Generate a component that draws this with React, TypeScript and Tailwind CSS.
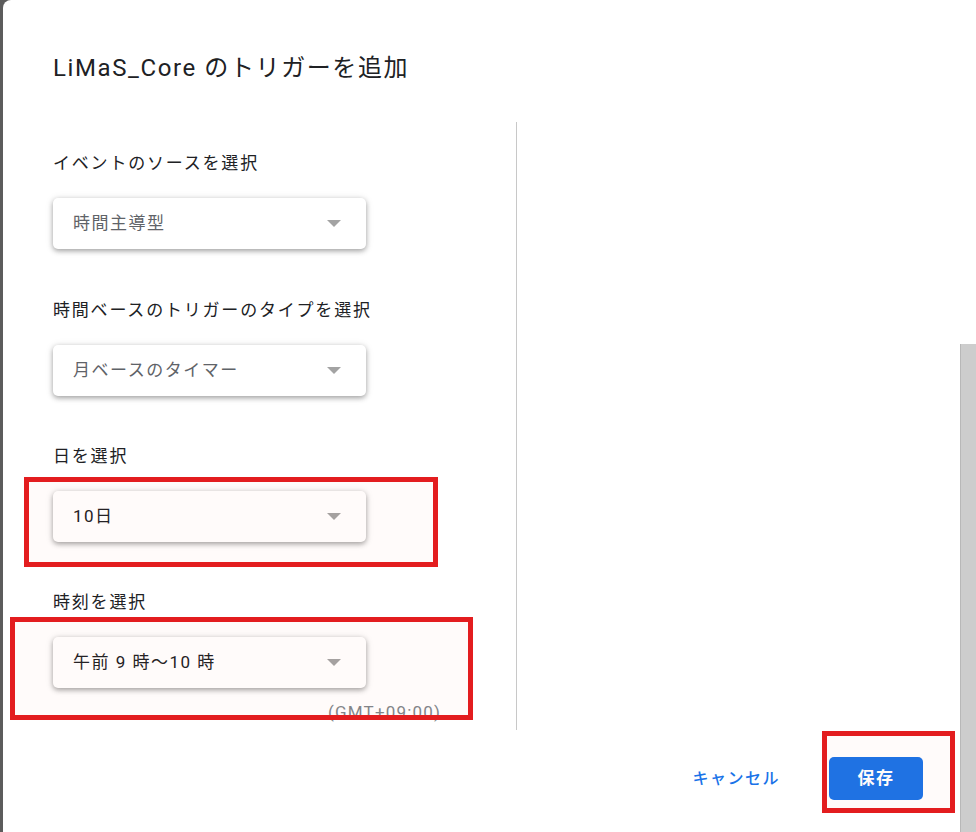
import React from 'react';

const font = { fontFamily: 'Roboto, "Noto Sans CJK JP", sans-serif' };

const Select = ({ value, dark }: { value: string; dark?: boolean }) => (
  <div className="w-[313px] h-[51px] bg-white rounded-[5px] shadow-[0_2px_5px_rgba(0,0,0,0.3),0_1px_9px_rgba(0,0,0,0.12)] flex items-center justify-between pl-[20px] pr-[25px]">
    <span className={`text-[17px] tracking-[1.5px] ${dark ? 'text-[#202124]' : 'text-[#5f6368]'}`}>{value}</span>
    <span className="w-0 h-0 border-l-[7px] border-r-[7px] border-t-[7px] border-l-transparent border-r-transparent border-t-[#a3a3a3]"></span>
  </div>
);

const Field = ({ label, value, dark, top }: { label: string; value: string; dark?: boolean; top: string }) => (
  <div className={top}>
    <div className="text-[17px] leading-[24px] tracking-[1.8px] text-[#202124] mb-[23px]">{label}</div>
    <Select value={value} dark={dark} />
  </div>
);

const App = () => {
  return (
    <div className="relative w-[976px] h-[832px] overflow-hidden bg-[#5c5c5c] flex" style={font}>
      {/* left edge of page behind dialog */}
      <div className="w-[3px] shrink-0"></div>

      {/* Dialog */}
      <div className="flex-1 bg-white rounded-tl-[8px] flex">
        <div className="flex-1 flex flex-col">
          <h1 className="pt-[52px] pl-[50px] text-[24px] leading-[32px] tracking-[1.6px] text-[#202124] font-normal">
            LiMaS_Core のトリガーを追加
          </h1>

          <div className="mt-[38px] pl-[50px] flex h-[608px]">
            <div className="w-[464px] h-full border-r border-[#c8c8c8] pt-[29px]">
              <Field label="イベントのソースを選択" value="時間主導型" top="" />
              <Field label="時間ベースのトリガーのタイプを選択" value="月ベースのタイマー" top="mt-[49px]" />
              <Field label="日を選択" value="10日" dark top="mt-[48px]" />
              <Field label="時刻を選択" value="午前 9 時〜10 時" dark top="mt-[48px]" />
              <div className="mt-[12px] ml-[275px] text-[17px] leading-[24px] tracking-[1.2px] text-[#80868b] whitespace-nowrap">
                (GMT+09:00)
              </div>
            </div>
          </div>

          {/* Footer buttons */}
          <div className="flex justify-end items-center pt-[27px] pr-[37px] gap-[49px]">
            <button className="text-[16px] tracking-[1.5px] font-medium text-[#1a73e8]">キャンセル</button>
            <button className="w-[94px] h-[43px] rounded-[5px] bg-[#1a73e8] text-white text-[17px] tracking-[1.4px] font-bold">
              保存
            </button>
          </div>
        </div>

        {/* page scrollbar */}
        <div className="w-[16px] shrink-0 pt-[344px]">
          <div className="h-full bg-[#cdcdcd] border-l border-[#b8b8b8]"></div>
        </div>
      </div>

      {/* red annotation boxes */}
      <div className="absolute left-[24px] top-[477px] w-[414px] h-[90px] border-[5px] border-[#e31d1f] bg-[rgba(255,90,60,0.025)]"></div>
      <div className="absolute left-[10px] top-[617px] w-[463px] h-[103px] border-[5px] border-[#e31d1f] bg-[rgba(255,90,60,0.025)]"></div>
      <div className="absolute left-[822px] top-[731px] w-[133px] h-[82px] border-[5px] border-[#e31d1f] bg-[rgba(255,90,60,0.025)]"></div>
    </div>
  );
};

export default App;
